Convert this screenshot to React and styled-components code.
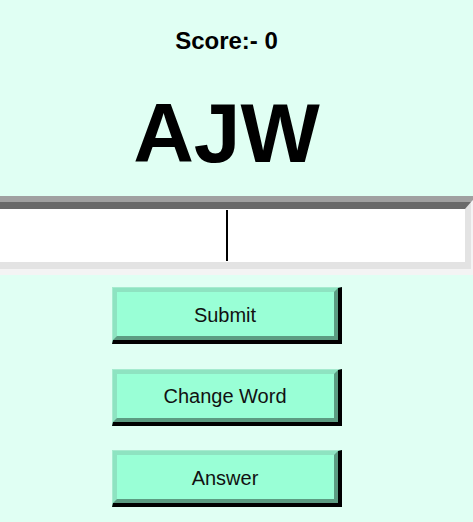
import React from 'react';
import styled, { createGlobalStyle } from 'styled-components';

const GlobalStyle = createGlobalStyle`
  html, body {
    margin: 0;
    padding: 0;
    background: #e0fff3;
    overflow: hidden;
  }
  body {
    font-family: 'Liberation Sans', Arial, sans-serif;
  }
`;

const Page = styled.main`
  display: flex;
  flex-direction: column;
  align-items: center;
  width: 453px;
  padding-top: 27px;
  min-height: 522px;
  box-sizing: border-box;
`;

const Score = styled.h2`
  margin: 0;
  font-size: 24px;
  line-height: 28px;
  font-weight: 700;
  color: #000;
`;

const Word = styled.h1`
  margin: 28px 0 0;
  font-size: 84px;
  line-height: 100px;
  font-weight: 700;
  color: #000;
`;

const Frame = styled.div`
  position: relative;
  align-self: flex-start;
  margin: 13px 0 0 -24px;
  width: 501px;
  box-sizing: border-box;
  border: 6px solid;
  border-color: #a0a0a0 #f4f4f4 #f4f4f4 #a0a0a0;
`;

const Field = styled.input`
  display: block;
  width: 100%;
  height: 67px;
  box-sizing: border-box;
  border-style: solid;
  border-width: 7px 6px;
  border-color: #696969 #e3e3e3 #e3e3e3 #696969;
  background: #fff;
  font-family: inherit;
  font-size: 44px;
  text-align: center;
  caret-color: transparent;
  outline: none;
  padding: 0;
`;

const Caret = styled.span`
  position: absolute;
  left: calc(50% - 1px);
  top: 8px;
  width: 2px;
  height: 51px;
  background: #000;
`;

const Buttons = styled.div`
  display: flex;
  flex-direction: column;
  gap: 24.5px;
  margin-top: 12px;
`;

const Button = styled.button`
  display: block;
  width: 230px;
  height: 57px;
  padding: 0;
  box-sizing: border-box;
  border-style: solid;
  border-width: 1px 4px 4px 1px;
  border-color: #a6ebcf #000 #000 #a6ebcf;
  background: #99ffd6;
  cursor: pointer;
`;

const Face = styled.span`
  display: flex;
  align-items: center;
  justify-content: center;
  height: 100%;
  padding-top: 2px;
  box-sizing: border-box;
  border-style: solid;
  border-width: 4px;
  border-color: #8ee3c1 #5c9c82 #5c9c82 #8ee3c1;
  font-family: 'Liberation Sans', Arial, sans-serif;
  font-size: 20px;
  color: #111;
`;

const labels = ['Submit', 'Change Word', 'Answer'];

const App = () => (
  <>
    <GlobalStyle />
    <Page>
      <Score>Score:- 0</Score>
      <Word>AJW</Word>
      <Frame>
        <Field type="text" aria-label="Your guess" />
        <Caret />
      </Frame>
      <Buttons>
        {labels.map((label) => (
          <Button key={label}>
            <Face>{label}</Face>
          </Button>
        ))}
      </Buttons>
    </Page>
  </>
);

export default App;
